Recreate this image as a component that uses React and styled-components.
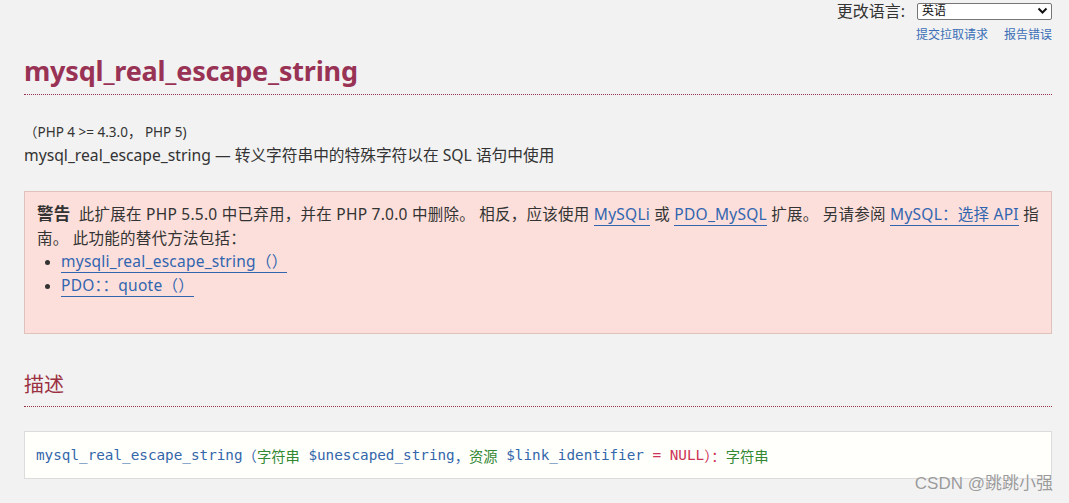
import styled, { createGlobalStyle } from "styled-components";

const Global = createGlobalStyle`
  html, body {
    margin: 0;
    padding: 0;
    background: #f2f2f2;
  }
  body {
    font-family: "Noto Sans", "Noto Sans CJK SC", sans-serif;
    color: #333;
  }
`;

const Page = styled.div`
  position: relative;
  height: 503px;
  overflow: hidden;
  padding: 0 17px 0 24px;
`;

const TopBar = styled.div`
  display: flex;
  flex-direction: column;
  align-items: flex-end;
  padding-top: 2px;
`;

const LangRow = styled.label`
  display: flex;
  align-items: center;
  gap: 12px;
  font-size: 16px;
  line-height: 18px;
  color: #333;
`;

const LangSelect = styled.div`
  width: 135px;
  height: 17px;
  box-sizing: border-box;
  border: 1px solid #767676;
  border-radius: 2px;
  background: #fff;
  display: flex;
  align-items: center;
  justify-content: space-between;
  padding: 0 3px 0 4px;
  font-size: 12px;
  color: #111;
`;

const EditLinks = styled.div`
  display: flex;
  gap: 16px;
  margin-top: 5px;
  font-size: 12px;
  a {
    color: #3b6fb6;
    text-decoration: none;
  }
`;

const Title = styled.h1`
  margin: 9px 0 0;
  padding-bottom: 5px;
  font-size: 27px;
  font-weight: 700;
  color: #993355;
  border-bottom: 1px dotted #993355;
  letter-spacing: -0.2px;
`;

const Version = styled.p`
  margin: 26px 0 0;
  font-size: 13.5px;
  color: #333;
`;

const Purpose = styled.p`
  margin: 2px 0 0;
  font-size: 15.7px;
  color: #333;
`;

const Warning = styled.div`
  margin-top: 25px;
  height: 143px;
  box-sizing: border-box;
  background: #fcdfda;
  border: 1px solid #e0c2bc;
  padding: 10px 12px;
  font-size: 15.5px;
  letter-spacing: 0.25px;
  line-height: 24px;
  color: #333;
`;

const Strong = styled.strong`
  font-weight: 700;
  font-size: 16.5px;
  margin-right: 4px;
`;

const Link = styled.a`
  color: #3165b0;
  text-decoration: none;
  border-bottom: 1px solid #3165b0;
`;

const List = styled.ul`
  margin: 0;
  padding-left: 24px;
  line-height: 23.5px;
  li::marker {
    font-size: 13px;
  }
`;

const SectionTitle = styled.h2`
  margin: 35px 0 0;
  padding-bottom: 8px;
  font-size: 20px;
  font-weight: 400;
  color: #9b3041;
  border-bottom: 1px dotted #993344;
`;

const CodeBox = styled.div`
  margin-top: 24px;
  height: 48px;
  box-sizing: border-box;
  background: #fffffc;
  border: 1px solid #dcdcdc;
  padding: 0 11px;
  display: flex;
  align-items: center;
  font-family: "DejaVu Sans Mono", "Noto Sans CJK SC", monospace;
  font-size: 14.3px;
  color: #3366aa;
`;

const Tok = styled.span`
  color: ${(p) => p.$c};
  font-family: ${(p) => (p.$cjk ? '"Noto Sans CJK SC", sans-serif' : "inherit")};
`;

const Watermark = styled.div`
  position: absolute;
  right: 16px;
  bottom: 9px;
  font-family: "Liberation Sans", "Noto Sans CJK SC", sans-serif;
  font-size: 17px;
  color: #9a9a9a;
  text-shadow: 0 0 1px #fff;
`;

function Chevron() {
  return (
    <svg width="11" height="8" viewBox="0 0 11 8">
      <path d="M1.5 1.5 L5.5 5.5 L9.5 1.5" fill="none" stroke="#111" strokeWidth="2" />
    </svg>
  );
}

export default function App() {
  return (
    <Page>
      <Global />
      <TopBar>
        <LangRow>
          更改语言:
          <LangSelect>
            <span>英语</span>
            <Chevron />
          </LangSelect>
        </LangRow>
        <EditLinks>
          <a href="#">提交拉取请求</a>
          <a href="#">报告错误</a>
        </EditLinks>
      </TopBar>

      <Title>mysql_real_escape_string</Title>
      <Version>（PHP 4 &gt;= 4.3.0， PHP 5)</Version>
      <Purpose>mysql_real_escape_string — 转义字符串中的特殊字符以在 SQL 语句中使用</Purpose>

      <Warning>
        <Strong>警告</Strong> 此扩展在 PHP 5.5.0 中已弃用，并在 PHP 7.0.0 中删除。 相反，应该使用{" "}
        <Link href="#">MySQLi</Link> 或 <Link href="#">PDO_MySQL</Link> 扩展。 另请参阅{" "}
        <Link href="#">MySQL：选择 API</Link> 指南。 此功能的替代方法包括：
        <List>
          <li>
            <Link href="#">mysqli_real_escape_string（） </Link>
          </li>
          <li>
            <Link href="#">PDO：：quote（） </Link>
          </li>
        </List>
      </Warning>

      <SectionTitle>描述</SectionTitle>
      <CodeBox>
        <span>mysql_real_escape_string</span>
        <Tok $c="#3366aa" $cjk>（</Tok>
        <Tok $c="#338833" $cjk>字符串</Tok>
        <span>&nbsp;$unescaped_string</span>
        <Tok $c="#3366aa" $cjk>，</Tok>
        <Tok $c="#338833" $cjk>资源</Tok>
        <span>&nbsp;$link_identifier</span>
        <Tok $c="#cc3355">&nbsp;=&nbsp;NULL</Tok>
        <Tok $c="#cc3355" $cjk>）：</Tok>
        <Tok $c="#338833" $cjk>字符串</Tok>
      </CodeBox>

      <Watermark>CSDN @跳跳小强</Watermark>
    </Page>
  );
}
